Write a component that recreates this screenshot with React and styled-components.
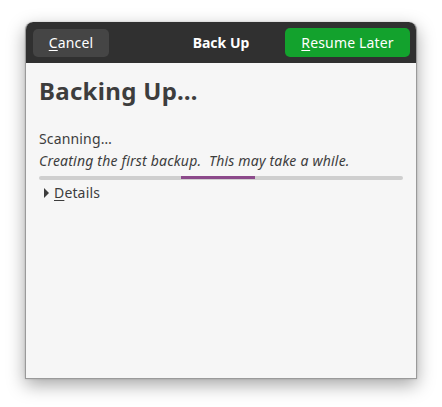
import styled, { createGlobalStyle } from "styled-components";

const Global = createGlobalStyle`
  html, body {
    margin: 0;
    padding: 0;
    background: #ffffff;
  }
  body {
    font-family: "Noto Sans", "Open Sans", sans-serif;
  }
`;

export default function App() {
  return (
    <>
      <Global />
      <Page>
        <Window>
          <HeaderBar>
            <HeaderButton>
              <Mnemonic>C</Mnemonic>ancel
            </HeaderButton>
            <HeaderTitle>Back Up</HeaderTitle>
            <HeaderButton suggested>
              <Mnemonic>R</Mnemonic>esume Later
            </HeaderButton>
          </HeaderBar>
          <Content>
            <Title>Backing Up…</Title>
            <Status>Scanning…</Status>
            <Note>Creating the first backup.&nbsp; This may take a while.</Note>
            <Trough>
              <Pulse />
            </Trough>
            <Expander>
              <Arrow />
              <span>
                <Mnemonic>D</Mnemonic>etails
              </span>
            </Expander>
          </Content>
        </Window>
      </Page>
    </>
  );
}

const Page = styled.div`
  padding: 22px 0 0 25px;
  height: 407px;
  box-sizing: border-box;
`;

const Window = styled.div`
  width: 392px;
  height: 357px;
  box-sizing: border-box;
  background: #f6f6f6;
  border: 1px solid #9a9a9a;
  border-top: none;
  border-radius: 8px 8px 0 0;
  box-shadow: 0 6px 18px rgba(0, 0, 0, 0.35), 0 0 2px rgba(0, 0, 0, 0.2);
  display: flex;
  flex-direction: column;
  overflow: hidden;
`;

const HeaderBar = styled.div`
  height: 41px;
  margin: 0 -1px;
  background: #303030;
  border-radius: 8px 8px 0 0;
  display: flex;
  align-items: center;
  justify-content: space-between;
  padding: 0 7px 0 8px;
  position: relative;
`;

const HeaderButton = styled.div`
  height: ${(p) => (p.suggested ? "29px" : "28px")};
  padding: 0 ${(p) => (p.suggested ? "16px" : "15px")};
  min-width: ${(p) => (p.suggested ? "125px" : "76px")};
  box-sizing: border-box;
  border-radius: 5px;
  background: ${(p) => (p.suggested ? "#13a22d" : "#454545")};
  color: #ffffff;
  font-size: 14px;
  letter-spacing: 0.15px;
  display: flex;
  align-items: center;
  justify-content: center;
`;

const HeaderTitle = styled.div`
  position: absolute;
  left: 0;
  right: 0;
  text-align: center;
  pointer-events: none;
  color: #ffffff;
  font-weight: bold;
  font-size: 14px;
`;

const Mnemonic = styled.span`
  text-decoration: underline;
  text-underline-offset: 2px;
`;

const Content = styled.div`
  padding: 12px 13px 0 13px;
  color: #3d3d3d;
`;

const Title = styled.div`
  font-size: 24px;
  font-weight: bold;
  line-height: 32px;
  letter-spacing: 0.3px;
  margin-bottom: 21px;
`;

const Status = styled.div`
  font-size: 14px;
  line-height: 22px;
  letter-spacing: 0.15px;
`;

const Note = styled.div`
  font-size: 14px;
  font-style: italic;
  line-height: 22px;
  letter-spacing: 0.2px;
`;

const Trough = styled.div`
  margin-top: 4px;
  height: 4px;
  border-radius: 2px;
  background: #cfcfcf;
  position: relative;
`;

const Pulse = styled.div`
  position: absolute;
  left: 142px;
  width: 74px;
  top: 0;
  bottom: 1px;
  background: #8c4a8b;
`;

const Expander = styled.div`
  display: flex;
  align-items: center;
  gap: 5px;
  margin-top: 2px;
  padding-left: 5px;
  font-size: 14px;
  line-height: 22px;
  letter-spacing: 0.15px;
`;

const Arrow = styled.div`
  width: 0;
  height: 0;
  border-top: 5px solid transparent;
  border-bottom: 5px solid transparent;
  border-left: 5px solid #3d3d3d;
`;
